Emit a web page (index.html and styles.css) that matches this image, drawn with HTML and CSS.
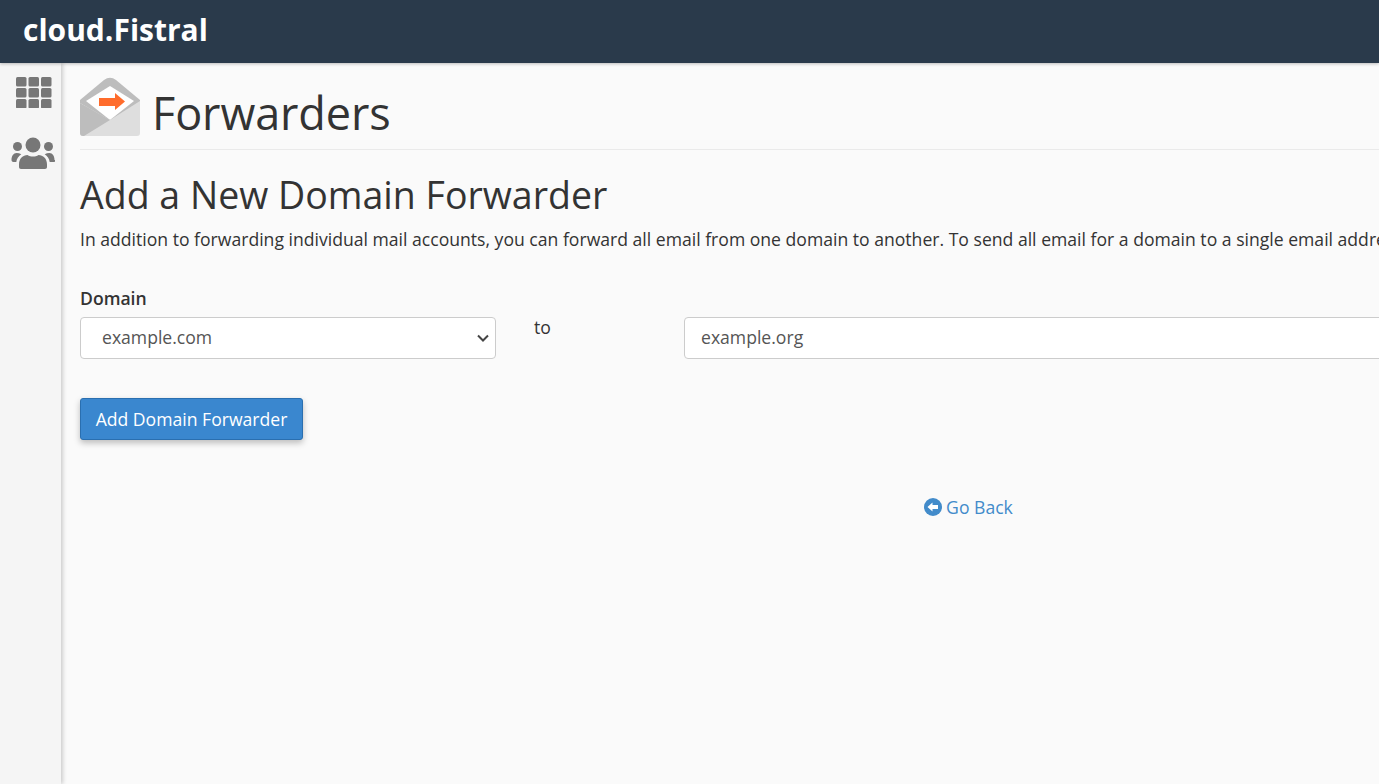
FILE: index.html
```html
<!DOCTYPE html>
<html lang="en">
<head>
<meta charset="utf-8">
<title>Forwarders</title>
<link rel="stylesheet" href="styles.css">
</head>
<body>
<header class="topbar"><a class="brand">cloud.Fistral</a></header>
<div class="shell">
  <nav class="sidebar">
    <svg class="nav-grid" width="36" height="31" viewBox="0 0 36 31" aria-hidden="true">
      <g fill="#777">
        <rect x="0" y="0" width="10.5" height="9.5" rx="1.5"/><rect x="12.5" y="0" width="10.5" height="9.5" rx="1.5"/><rect x="25" y="0" width="10.5" height="9.5" rx="1.5"/>
        <rect x="0" y="11" width="10.5" height="9.5" rx="1.5"/><rect x="12.5" y="11" width="10.5" height="9.5" rx="1.5"/><rect x="25" y="11" width="10.5" height="9.5" rx="1.5"/>
        <rect x="0" y="22" width="10.5" height="9.5" rx="1.5"/><rect x="12.5" y="22" width="10.5" height="9.5" rx="1.5"/><rect x="25" y="22" width="10.5" height="9.5" rx="1.5"/>
      </g>
    </svg>
    <svg class="nav-users" width="44" height="32" viewBox="0 0 44 32" aria-hidden="true">
      <g fill="#777">
        <circle cx="22" cy="8" r="7.500"/>
        <path d="M10 32c-1.200 0-2-.8-2-2v-2.500c0-6 4-9.500 8.500-9.500 1.700 1.100 3.500 1.600 5.500 1.600s3.800-.5 5.500-1.600c4.500 0 8.500 3.500 8.500 9.500V30c0 1.200-.8 2-2 2z"/>
        <circle cx="6.500" cy="9.500" r="4.500"/>
        <circle cx="37.500" cy="9.500" r="4.500"/>
        <path d="M0.500 23c0-4 2-7 5-7 1.700 0 3.300.4 4.800 1.300-2.700 1.800-4.500 4.400-5 7.700H2.500c-1.200 0-2-.8-2-2z"/>
        <path d="M43.500 23c0-4-2-7-5-7-1.700 0-3.300.4-4.800 1.300 2.700 1.800 4.500 4.400 5 7.700h3.800c1.200 0 2-.8 2-2z"/>
      </g>
    </svg>
  </nav>
  <main class="content">
    <div class="page-head">
      <svg class="app-icon" width="60" height="60" viewBox="0 0 60 60" aria-hidden="true">
        <path d="M0 23 L24 3 Q30 -1.500 36 3 L60 23 V26 L30 45 L0 26Z" fill="#bdbdbd"/>
        <path d="M6 24 L30 9 L54 24 L30 43Z" fill="#fff"/>
        <path d="M0 26 L30 43 L60 24 V56 Q60 59 57 59 H3 Q0 59 0 56Z" fill="#dedede"/>
        <path d="M0 26 L30 43 L4 59 H3 Q0 59 0 56Z" fill="#bdbdbd"/>
        <path d="M19 21 H35 V16 L45 24.500 L35 33 V29 H19Z" fill="#ff6c2c"/>
      </svg>
      <h1 class="page-title">Forwarders</h1>
    </div>
    <section class="section">
      <h2 class="section-title">Add a New Domain Forwarder</h2>
      <p class="intro">In addition to forwarding individual mail accounts, you can forward all email from one domain to another. To send all email for a domain to a single email address, use the default address feature of your account.</p>
      <form class="forward-form">
        <div class="field-group">
          <label class="field-label" for="domain">Domain</label>
          <div class="select-wrap">
            <select class="control select-control" id="domain"><option>example.com</option></select>
            <svg class="select-chevron" width="12" height="8" viewBox="0 0 12 8" aria-hidden="true"><path d="M1 1.500 L6 6.500 L11 1.500" fill="none" stroke="#444" stroke-width="2"/></svg>
          </div>
        </div>
        <div class="to-label">to</div>
        <div class="field-group target">
          <input class="control input-control" type="text" value="example.org" aria-label="Target domain">
        </div>
      </form>
      <button class="btn-primary" type="button">Add Domain Forwarder</button>
      <div class="back-row">
        <a class="back-link">
          <svg width="18" height="18" viewBox="0 0 18 18" aria-hidden="true"><circle cx="9" cy="9" r="9" fill="#428bca"/><path d="M3.500 9 L8.500 4.500 V7 H14 V11 H8.500 V13.500Z" fill="#fff"/></svg>
          <span>Go Back</span>
        </a>
      </div>
    </section>
  </main>
</div>
</body>
</html>
```
FILE: styles.css
```css
* { box-sizing: border-box; }
html, body { margin: 0; height: 100%; overflow: hidden; }
body {
  font-family: "Open Sans", "Liberation Sans", sans-serif;
  font-size: 17.6px;
  color: #333;
  background: #fafafa;
}
.topbar {
  height: 63px;
  background: #2a3a4b;
  display: flex;
  align-items: center;
  padding-left: 23px;
  position: relative;
  z-index: 2;
  box-shadow: 0 1px 3px rgba(0,0,0,.25);
}
.brand { color: #fff; font-size: 30px; font-weight: 700; line-height: 1; padding-bottom: 3px; }
.shell { display: flex; height: 721px; }
.sidebar {
  width: 61px;
  flex: none;
  background: #f5f5f5;
  box-shadow: 2px 0 4px rgba(0,0,0,.18);
  display: flex;
  flex-direction: column;
  align-items: center;
  padding-top: 14px;
  gap: 29px;
  position: relative;
  z-index: 1;
}
.nav-grid { margin-left: 7px; }
.nav-users { margin-left: 5px; }
.content { flex: none; width: 1812px; padding: 15px 19px 0; }
.page-head {
  display: flex;
  align-items: center;
  gap: 12px;
  height: 72px;
  padding-bottom: 13px;
  border-bottom: 1px solid #eaeaea;
}
.app-icon { flex: none; }
.page-title { margin: 12px 0 0; font-size: 45px; font-weight: 400; line-height: 1.1; color: #333; letter-spacing: -.1px; }
.section-title { margin: 20px 0 0; font-size: 37.5px; font-weight: 400; line-height: 50px; color: #333; }
.intro { margin: 7px 0 0; line-height: 24px; color: #333; white-space: nowrap; }
.forward-form { display: flex; align-items: flex-start; margin-top: 35px; }
.field-group { width: 416px; flex: none; display: flex; flex-direction: column; }
.field-label { font-weight: 600; line-height: 24px; margin-bottom: 7px; }
.select-wrap { position: relative; }
.select-chevron { position: absolute; right: 7px; top: 17px; pointer-events: none; }
.to-label { width: 188px; flex: none; padding: 29px 0 0 38px; line-height: 24px; }
.target { flex: 1; padding-top: 31px; }
.control {
  height: 42px;
  width: 100%;
  font: inherit;
  color: #555;
  background: #fff;
  border: 1px solid #ccc;
  border-radius: 4px;
}
.select-control { padding: 0 21px 2px; appearance: none; }
.input-control { padding: 0 16px 2px; }
.btn-primary {
  display: block;
  margin-top: 39px;
  height: 42px;
  width: 223px;
  padding: 0;
  font: inherit;
  color: #fff;
  background: #3a87cf;
  border: 1px solid #2a6fb0;
  border-radius: 3px;
  box-shadow: 0 3px 6px rgba(0,0,0,.25);
}
.back-row { display: flex; justify-content: center; margin-top: 55px; }
.back-link { display: inline-flex; align-items: center; gap: 4px; color: #428bca; line-height: 24px; }
.back-link svg { margin-left: 3px; }
```
